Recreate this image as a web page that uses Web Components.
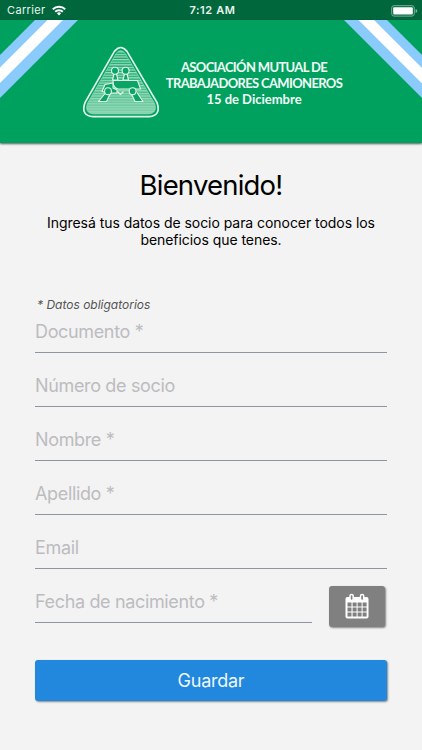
<!DOCTYPE html>
<html lang="es">
<head>
<meta charset="utf-8">
<title>Bienvenido</title>
<style>
  html, body {
    margin: 0;
    height: 100%;
  }
  body {
    font-family: Inter, "Liberation Sans", sans-serif;
    background: #f3f3f3;
    overflow: hidden;
    --green: #00a15f;
    --dark-green: #00673d;
    --blue: #2288dd;
    --ribbon: #8bcbfc;
  }
</style>
</head>
<body>
<mutual-app></mutual-app>

<script>
function define(name, html) {
  const template = document.createElement('template');
  template.innerHTML = html;
  customElements.define(name, class extends HTMLElement {
    constructor() {
      super();
      this.attachShadow({mode: 'open'});
      this.shadowRoot.appendChild(template.content.cloneNode(true));
    }
  });
}

define('status-bar', `
  <style>
    :host {
      display: grid;
      grid-template-columns: 1fr auto 1fr;
      align-items: center;
      height: 20px;
      padding: 1px 4px 0 7px;
      box-sizing: border-box;
      background: var(--dark-green);
      color: #e9f7ef;
      font-size: 11px;
      line-height: 19px;
    }
    .carrier {
      display: flex;
      align-items: center;
      gap: 6px;
      letter-spacing: 0.35px;
    }
    .time {
      font-weight: 600;
      letter-spacing: 0.6px;
    }
    .battery {
      justify-self: end;
    }
    svg {
      display: block;
    }
  </style>
  <div class="carrier">
    <span>Carrier</span>
    <svg width="14" height="11" viewBox="0 0 14 11" fill="none" stroke="#fff" stroke-width="2">
      <path d="M.8 4.2a8.8 8.8 0 0 1 12.4 0M3.2 6.8a5.4 5.4 0 0 1 7.6 0"/>
      <path d="M7 10.4 4.9 8.3a3 3 0 0 1 4.2 0z" fill="#fff" stroke="none"/>
    </svg>
  </div>
  <span class="time">7:12 AM</span>
  <svg class="battery" width="27" height="12" viewBox="0 0 27 12">
    <rect x=".7" y=".7" width="22.6" height="10.4" rx="2.4" fill="none" stroke="#7fb09a" stroke-width="1"/>
    <rect x="2.2" y="2.2" width="19.6" height="7.4" rx="1" fill="#fff"/>
    <path d="M24.6 4v4q1.7-.6 1.7-2t-1.7-2z" fill="#7fb09a"/>
  </svg>
`);

define('mutual-logo', `
  <style>
    :host, svg {
      display: block;
    }
  </style>
  <svg width="78" height="72" viewBox="0 0 78 72" fill="none">
    <defs>
      <pattern id="lines" width="4" height="2.6" patternUnits="userSpaceOnUse">
        <rect width="4" height="1.3" fill="#a4dfc3"/>
      </pattern>
      <linearGradient id="fade" x2="0" y2="1">
        <stop offset=".3" stop-color="#7fd0a8" stop-opacity=".15"/>
        <stop offset="1" stop-color="#8fd8b4" stop-opacity=".9"/>
      </linearGradient>
    </defs>
    <path d="M32.4 5.4Q38.6-2.4 45 5.4L75 56.5Q79.5 69.6 67 70.6H11Q-1.6 69.6 3 56.5z" stroke="#e4f7ec" stroke-width="1.7"/>
    <path d="M34.2 7.4Q38.6 1.8 43.2 7.4L72.6 57.5Q75.8 67.2 66.5 67.9H11.5Q2.2 67.2 5.4 57.5z" fill="url(#lines)" stroke="#a8e0c6" stroke-width=".6"/>
    <path d="M34.2 7.4Q38.6 1.8 43.2 7.4L72.6 57.5Q75.8 67.2 66.5 67.9H11.5Q2.2 67.2 5.4 57.5z" fill="url(#fade)"/>
    <g fill="#0ba566" stroke="#e0f6ea" stroke-width="1.1" stroke-linejoin="round">
      <path d="m30.500 34 1.500-6h2.500l1.500 6zM41 34l1.500-6H45l1.500 6z"/>
      <circle cx="33" cy="24.7" r="3.5"/>
      <circle cx="43.6" cy="24.7" r="3.5"/>
      <path d="M20 45.500 23 38.500l8-1.500v5l4 2v3h-9z"/>
      <path d="m23 47.500-6.500 8h8l4-8.500M49 47l4 8.500h8l-6-9"/>
      <path d="M31 34.500h24.500l3 8.500H36q-5-1-5-8.500z"/>
      <circle cx="26" cy="45.200" r="3.400"/>
      <circle cx="50.600" cy="45.200" r="3.400"/>
      <path d="m35.500 45.500 3 3 3-3" fill="none"/>
    </g>
  </svg>
`);

define('brand-header', `
  <style>
    :host {
      display: grid;
      height: 123px;
      background: var(--green);
      box-shadow: 0 1px 2px rgba(0, 0, 0, .65);
    }
    .ribbons, .brand {
      grid-area: 1 / 1;
    }
    .ribbons {
      display: block;
    }
    .brand {
      display: flex;
      align-items: flex-start;
      padding: 26px 0 0 82px;
    }
    .name {
      width: 188px;
      padding-top: 13px;
      color: #f2fcf6;
      font: 700 13px/16px Lato, sans-serif;
      text-align: center;
      white-space: nowrap;
    }
    .name div:nth-child(1) { letter-spacing: -0.65px; }
    .name div:nth-child(2) { letter-spacing: -0.65px; }
    .name div:nth-child(3) { letter-spacing: 0; }
  </style>
  <svg class="ribbons" width="422" height="123" viewBox="0 0 422 123">
    <g fill="var(--ribbon)">
      <path d="M35 0h43L0 78V35z"/>
      <path d="M344 0h43l35 35v43z"/>
    </g>
    <g fill="#fff">
      <path d="M47.500 0H63L0 63V47.500z"/>
      <path d="M358.500 0H374l48 48v15.500z"/>
    </g>
  </svg>
  <div class="brand">
    <mutual-logo></mutual-logo>
    <div class="name">
      <div>ASOCIACIÓN MUTUAL DE</div>
      <div>TRABAJADORES CAMIONEROS</div>
      <div>15 de Diciembre</div>
    </div>
  </div>
`);

define('text-field', `
  <style>
    :host {
      display: block;
      height: 42px;
      box-sizing: border-box;
      border-bottom: 1px solid #8f94a3;
      color: #bcbcbf;
      font-size: 18px;
      line-height: 41px;
      letter-spacing: -0.35px;
      white-space: nowrap;
    }
  </style>
  <slot></slot>
`);

define('app-button', `
  <style>
    :host {
      display: flex;
      align-items: center;
      justify-content: center;
      height: 41px;
      border-radius: 3px;
      background: var(--button-color, var(--blue));
      box-shadow: 1px 1px 2px rgba(0, 0, 0, .45);
      color: #eef7fd;
      font-size: 18px;
    }
  </style>
  <slot></slot>
`);

define('calendar-icon', `
  <style>
    :host, svg {
      display: block;
    }
  </style>
  <svg width="24" height="26" viewBox="0 0 24 26">
    <rect x=".5" y="4" width="23" height="21.500" rx="2" fill="#fff"/>
    <g fill="#808080">
      <path d="M2.500 9.500h4v4h-4zM7.600 9.500h4v4h-4zM12.600 9.500h4v4h-4zM17.600 9.500h4v4h-4z"/>
      <path d="M2.500 14.500h4v4h-4zM7.600 14.500h4v4h-4zM12.600 14.500h4v4h-4zM17.600 14.500h4v4h-4z"/>
      <path d="M2.500 19.500h4v4h-4zM7.600 19.500h4v4h-4zM12.600 19.500h4v4h-4zM17.600 19.500h4v4h-4z"/>
    </g>
    <g fill="#808080" stroke="#fff" stroke-width="1.500">
      <rect x="5" y="1.400" width="3.200" height="6" rx="1.500"/>
      <rect x="15.500" y="1.400" width="3.200" height="6" rx="1.500"/>
    </g>
  </svg>
`);

define('member-form', `
  <style>
    :host {
      display: flex;
      flex-direction: column;
      padding: 0 35px;
    }
    .hint {
      margin-left: 2px;
      color: #555;
      font-size: 12px;
      font-style: italic;
      line-height: 14px;
    }
    .fields {
      display: flex;
      flex-direction: column;
      gap: 12px;
      margin-top: -1px;
    }
    .date {
      display: flex;
      gap: 17px;
      padding-right: 2px;
    }
    .date text-field {
      flex: 1;
    }
    .date app-button {
      width: 56px;
      margin-top: 4.500px;
      --button-color: #808080;
    }
    .save {
      margin-top: 33.500px;
      letter-spacing: -0.25px;
    }
  </style>
  <div class="hint">* Datos obligatorios</div>
  <div class="fields">
    <text-field>Documento *</text-field>
    <text-field>Número de socio</text-field>
    <text-field>Nombre *</text-field>
    <text-field>Apellido *</text-field>
    <text-field>Email</text-field>
    <div class="date">
      <text-field>Fecha de nacimiento *</text-field>
      <app-button><calendar-icon></calendar-icon></app-button>
    </div>
  </div>
  <app-button class="save">Guardar</app-button>
`);

define('mutual-app', `
  <style>
    :host {
      display: flex;
      flex-direction: column;
      width: 422px;
      height: 750px;
      background: #f3f3f3;
    }
    h1 {
      margin: 25px 0 0;
      font-size: 27.500px;
      font-weight: 400;
      line-height: 35px;
      text-align: center;
      letter-spacing: -0.8px;
    }
    p {
      margin: 11px 0 50px;
      font-size: 14px;
      line-height: 17px;
      text-align: center;
      white-space: nowrap;
      letter-spacing: -0.05px;
    }
  </style>
  <status-bar></status-bar>
  <brand-header></brand-header>
  <h1>Bienvenido!</h1>
  <p>Ingresá tus datos de socio para conocer todos los<br>beneficios que tenes.</p>
  <member-form></member-form>
`);
</script>
</body>
</html>
